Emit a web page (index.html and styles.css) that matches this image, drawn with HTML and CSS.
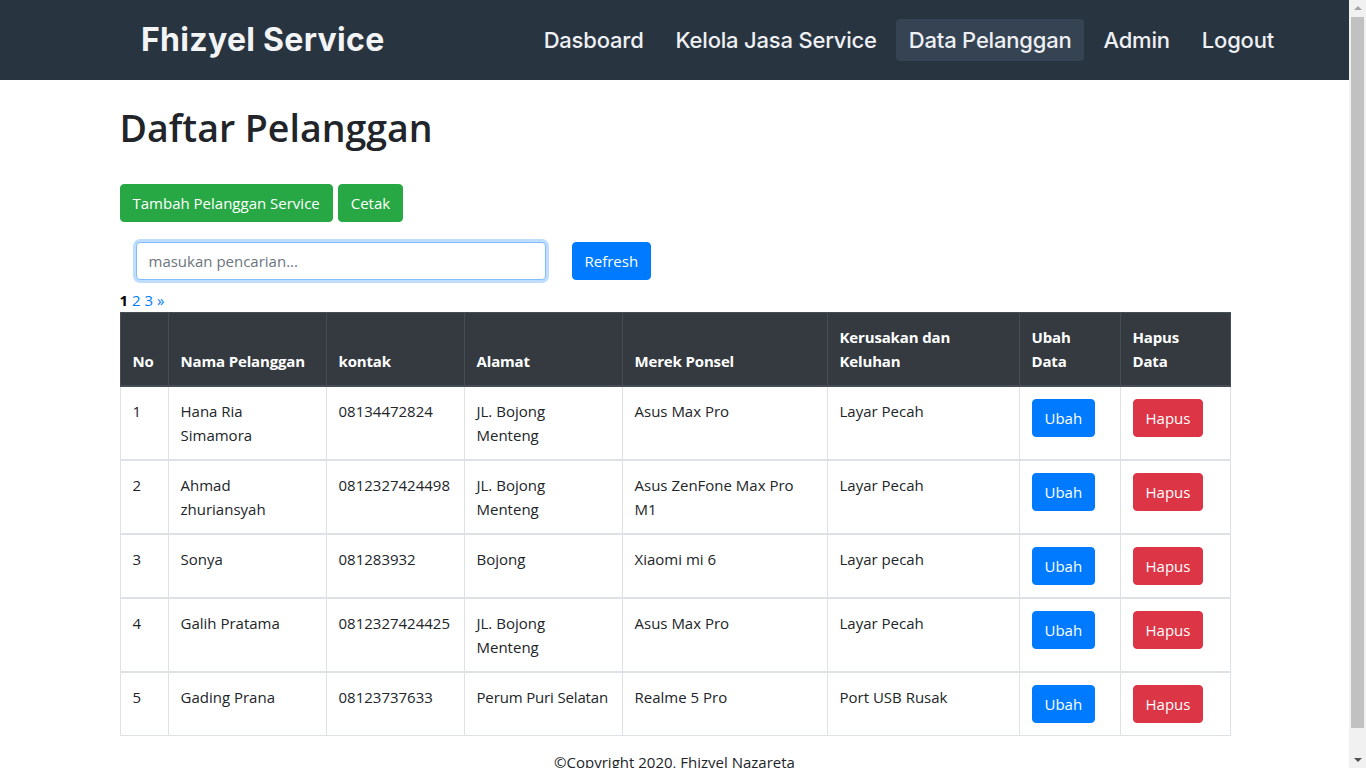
FILE: index.html
```html
<!DOCTYPE html>
<html lang="id">
<head>
<meta charset="utf-8">
<title>Daftar Pelanggan - Fhizyel Service</title>
<link rel="stylesheet" href="styles.css">
</head>
<body>
<nav class="navbar">
  <a class="brand" href="#">Fhizyel Service</a>
  <div class="nav-links">
    <a class="nav-link" href="#">Dasboard</a>
    <a class="nav-link" href="#">Kelola Jasa Service</a>
    <a class="nav-link active" href="#">Data Pelanggan</a>
    <a class="nav-link" href="#">Admin</a>
    <a class="nav-link" href="#">Logout</a>
  </div>
</nav>

<main class="container">
  <h1 class="title">Daftar Pelanggan</h1>

  <div class="actions">
    <a class="btn btn-success" href="#">Tambah Pelanggan Service</a>
    <a class="btn btn-success" href="#">Cetak</a>
  </div>

  <form class="search-row">
    <input class="search-input" type="text" placeholder="masukan pencarian...">
    <a class="btn btn-primary refresh" href="#">Refresh</a>
  </form>

  <div class="pagination">
    <b>1</b> <a href="#">2</a> <a href="#">3</a> <a href="#">&raquo;</a>
  </div>

  <table class="data-table">
    <colgroup>
      <col class="c-no"><col class="c-nama"><col class="c-kontak"><col class="c-alamat">
      <col class="c-merek"><col class="c-kerusakan"><col class="c-ubah"><col class="c-hapus">
    </colgroup>
    <thead>
      <tr>
        <th>No</th><th>Nama Pelanggan</th><th>kontak</th><th>Alamat</th>
        <th>Merek Ponsel</th><th>Kerusakan dan Keluhan</th><th>Ubah Data</th><th>Hapus Data</th>
      </tr>
    </thead>
    <tbody>
      <tr>
        <td>1</td><td>Hana Ria Simamora</td><td>08134472824</td><td>JL. Bojong Menteng</td>
        <td>Asus Max Pro</td><td>Layar Pecah</td>
        <td><a class="btn btn-primary" href="#">Ubah</a></td>
        <td><a class="btn btn-danger" href="#">Hapus</a></td>
      </tr>
    </tbody>
    <tbody>
      <tr>
        <td>2</td><td>Ahmad zhuriansyah</td><td>0812327424498</td><td>JL. Bojong Menteng</td>
        <td>Asus ZenFone Max Pro M1</td><td>Layar Pecah</td>
        <td><a class="btn btn-primary" href="#">Ubah</a></td>
        <td><a class="btn btn-danger" href="#">Hapus</a></td>
      </tr>
    </tbody>
    <tbody>
      <tr>
        <td>3</td><td>Sonya</td><td>081283932</td><td>Bojong</td>
        <td>Xiaomi mi 6</td><td>Layar pecah</td>
        <td><a class="btn btn-primary" href="#">Ubah</a></td>
        <td><a class="btn btn-danger" href="#">Hapus</a></td>
      </tr>
    </tbody>
    <tbody>
      <tr>
        <td>4</td><td>Galih Pratama</td><td>0812327424425</td><td>JL. Bojong Menteng</td>
        <td>Asus Max Pro</td><td>Layar Pecah</td>
        <td><a class="btn btn-primary" href="#">Ubah</a></td>
        <td><a class="btn btn-danger" href="#">Hapus</a></td>
      </tr>
    </tbody>
    <tbody>
      <tr>
        <td>5</td><td>Gading Prana</td><td>08123737633</td><td class="tight">Perum Puri Selatan</td>
        <td>Realme 5 Pro</td><td>Port USB Rusak</td>
        <td><a class="btn btn-primary" href="#">Ubah</a></td>
        <td><a class="btn btn-danger" href="#">Hapus</a></td>
      </tr>
    </tbody>
  </table>
</main>

<footer class="footer">&copy;Copyright 2020, Fhizyel Nazareta</footer>

<div class="scrollbar" aria-hidden="true">
  <span class="arrow arrow-up"></span>
  <span class="thumb"></span>
  <span class="arrow arrow-down"></span>
</div>
</body>
</html>
```

FILE: styles.css
```css
* { box-sizing: border-box; }

html, body {
  margin: 0;
  padding: 0;
}

body {
  font-family: "Open Sans", "Noto Sans", sans-serif;
  font-size: 15px;
  line-height: 24px;
  color: #212529;
  background: #fff;
  padding-right: 17px;
}

a { text-decoration: none; }

/* Navbar */
.navbar {
  height: 80px;
  background: #293441;
  display: flex;
  align-items: center;
  justify-content: space-between;
  padding: 0 62px 0 141px;
}

.brand {
  font-family: "Inter", sans-serif;
  font-weight: 700;
  font-size: 32px;
  line-height: 40px;
  color: #f3f4f6;
  letter-spacing: 0.3px;
}

.nav-links {
  display: flex;
  gap: 6px;
}

.nav-link {
  font-family: "Inter", sans-serif;
  font-weight: 500;
  font-size: 22px;
  color: #eef0f3;
  height: 42px;
  line-height: 42px;
  padding: 0 13px;
  border-radius: 4px;
  letter-spacing: -0.2px;
}

.nav-link.active {
  background: #354353;
}

/* Main content */
.container {
  width: 1140px;
  margin: 0 auto;
  padding: 0 15px;
}

.title {
  font-size: 37.5px;
  font-weight: 600;
  line-height: 48px;
  margin: 24px 0 32px;
}

.btn {
  display: inline-block;
  font-size: 15px;
  line-height: 24px;
  padding: 6px 12px;
  border: 1px solid transparent;
  border-radius: 4px;
  color: #fff;
  vertical-align: top;
}

.btn-success { background: #28a745; border-color: #28a745; }
.btn-primary { background: #007bff; border-color: #007bff; }
.btn-danger { background: #dc3545; border-color: #dc3545; }

.actions {
  display: flex;
  gap: 5px;
}

.search-row {
  display: flex;
  align-items: center;
  margin: 20px 0 0;
  padding-left: 16px;
}

.search-input {
  width: 410px;
  height: 38px;
  padding: 6px 12px;
  font-family: inherit;
  font-size: 15px;
  color: #495057;
  border: 1px solid #80bdff;
  border-radius: 4px;
  outline: none;
  box-shadow: 0 0 0 3px rgba(0, 123, 255, 0.25);
}

.search-input::placeholder { color: #6c757d; }

.refresh { margin-left: 26px; }

.pagination {
  margin-top: 9px;
  height: 23px;
  line-height: 23px;
  font-size: 15px;
}

.pagination b { color: #000; }
.pagination a { color: #007bff; }

/* Table */
.data-table {
  width: 1110px;
  border-collapse: collapse;
  table-layout: fixed;
}

.c-no { width: 48px; }
.c-nama { width: 158px; }
.c-kontak { width: 138px; }
.c-alamat { width: 158px; }
.c-merek { width: 205px; }
.c-kerusakan { width: 192px; }
.c-ubah { width: 101px; }
.c-hapus { width: 110px; }

.data-table th,
.data-table td {
  padding: 12px;
  border: 1px solid #dee2e6;
  vertical-align: top;
  text-align: left;
}

.data-table td.tight {
  letter-spacing: -0.15px;
  white-space: nowrap;
}

.data-table thead th {
  background: #343a40;
  color: #fff;
  font-weight: 700;
  letter-spacing: -0.15px;
  border-color: #454d55;
  border-bottom-width: 2px;
  vertical-align: bottom;
}

.data-table tbody + tbody {
  border-top: 2px solid #dee2e6;
}

.footer {
  text-align: center;
  padding: 14px 0 16px;
}

/* Window scrollbar (drawn over the right edge) */
.scrollbar {
  position: fixed;
  top: 0;
  right: 0;
  width: 17px;
  height: 100vh;
  background: #f1f1f1;
  display: flex;
  flex-direction: column;
  align-items: center;
}

.arrow {
  width: 0;
  height: 0;
  border-left: 4px solid transparent;
  border-right: 4px solid transparent;
  flex: none;
}

.arrow-up {
  margin-top: 6px;
  border-bottom: 4px solid #a3a3a3;
}

.arrow-down {
  margin-bottom: 6px;
  border-top: 4px solid #505050;
}

.thumb {
  width: 13px;
  margin: 7px 0 30px;
  flex: 1;
  background: #c1c1c1;
}
```
